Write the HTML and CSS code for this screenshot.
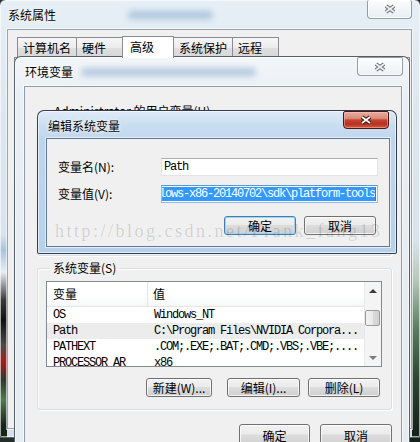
FILE: index.html
```html
<!DOCTYPE html>
<html lang="zh-CN">
<head>
    <meta charset="UTF-8">
    <meta name="viewport" content="width=device-width, initial-scale=1.0">
    <title>编辑系统变量</title>
    <link rel="stylesheet" href="styles.css">
</head>
<body>
    <div class="desktop">

        <!-- 系统属性 -->
        <div class="window sysprops">
            <div class="titlebar">
                <span class="title">系统属性</span>
                <span class="title-blur"></span>
                <button class="close-btn">
                    <svg width="12" height="10" viewBox="0 0 12 10"><path d="M2 2L10 8M10 2L2 8" stroke="#6a6e73" stroke-width="4" fill="none"/><path d="M2 2L10 8M10 2L2 8" stroke="#eef1f4" stroke-width="1.8" fill="none"/></svg>
                </button>
            </div>
            <div class="client">
                <div class="tabs">
                    <span class="tab">计算机名</span>
                    <span class="tab">硬件</span>
                    <span class="tab active">高级</span>
                    <span class="tab">系统保护</span>
                    <span class="tab">远程</span>
                </div>
                <div class="tab-panel"></div>
            </div>
        </div>

        <!-- 环境变量 -->
        <div class="window envvars">
            <div class="titlebar">
                <span class="title">环境变量</span>
                <span class="title-blur"></span>
                <button class="close-btn">
                    <svg width="12" height="10" viewBox="0 0 12 10"><path d="M2 2L10 8M10 2L2 8" stroke="#6a6e73" stroke-width="4" fill="none"/><path d="M2 2L10 8M10 2L2 8" stroke="#eef1f4" stroke-width="1.8" fill="none"/></svg>
                </button>
            </div>
            <div class="client">
                <fieldset class="group user-group">
                    <legend>Administrator 的用户变量(U)</legend>
                </fieldset>
                <fieldset class="group sys-group">
                    <legend>系统变量(S)</legend>
                    <div class="listview">
                        <div class="list-body">
                            <div class="list-head">
                                <span class="col-name">变量</span>
                                <span class="col-value">值</span>
                            </div>
                            <div class="list-row"><span class="col-name">OS</span><span class="col-value">Windows_NT</span></div>
                            <div class="list-row selected"><span class="col-name">Path</span><span class="col-value">C:\Program Files\NVIDIA Corpora...</span></div>
                            <div class="list-row"><span class="col-name">PATHEXT</span><span class="col-value">.COM;.EXE;.BAT;.CMD;.VBS;.VBE;....</span></div>
                            <div class="list-row"><span class="col-name">PROCESSOR_AR</span><span class="col-value">x86</span></div>
                        </div>
                        <div class="scrollbar">
                            <span class="sb-btn"><i class="arrow-up"></i></span>
                            <span class="sb-track"><span class="sb-thumb"></span></span>
                            <span class="sb-btn"><i class="arrow-down"></i></span>
                        </div>
                    </div>
                    <div class="button-row list-buttons">
                        <button class="btn btn-new">新建(W)...</button>
                        <button class="btn btn-edit">编辑(I)...</button>
                        <button class="btn btn-del">删除(L)</button>
                    </div>
                </fieldset>
                <div class="button-row dialog-buttons">
                    <button class="btn btn-ok">确定</button>
                    <button class="btn btn-cancel">取消</button>
                </div>
            </div>
        </div>

        <!-- 编辑系统变量 -->
        <div class="window editvar">
            <div class="titlebar">
                <span class="title">编辑系统变量</span>
                <button class="close-btn active">
                    <svg width="12" height="10" viewBox="0 0 12 10"><path d="M2 2L10 8M10 2L2 8" stroke="#3a0f0a" stroke-width="4" fill="none"/><path d="M2 2L10 8M10 2L2 8" stroke="#fff" stroke-width="1.8" fill="none"/></svg>
                </button>
            </div>
            <div class="client">
                <div class="field-row">
                    <span class="field-label">变量名(N):</span>
                    <div class="textbox">Path</div>
                </div>
                <div class="field-row">
                    <span class="field-label">变量值(V):</span>
                    <div class="textbox focused"><span class="selection">lows-x86-20140702\sdk\platform-tools</span><span class="caret"></span></div>
                </div>
                <div class="button-row edit-buttons">
                    <button class="btn btn-default">确定</button>
                    <button class="btn">取消</button>
                </div>
            </div>
        </div>

        <div class="watermark">http://blog.csdn.net/Frank_fang13</div>
    </div>
</body>
</html>
```

FILE: styles.css
```css
* {
    box-sizing: border-box;
}

body {
    margin: 0;
    font-family: "Noto Sans CJK SC", "Noto Sans", sans-serif;
    font-size: 12px;
    line-height: 14px;
    color: #000;
    background: #1b2520;
}

.desktop {
    position: relative;
    width: 420px;
    height: 442px;
    overflow: hidden;
    background: linear-gradient(90deg, #23302a, #17211b);
}

/* Window chrome */
.window {
    position: absolute;
    display: flex;
    flex-direction: column;
    border: 1px solid rgba(25, 35, 45, 0.7);
    border-radius: 7px 7px 2px 2px;
    box-shadow: inset 0 0 0 1px rgba(255, 255, 255, 0.6);
}

.titlebar {
    display: flex;
    align-items: flex-start;
    flex-shrink: 0;
    padding-left: 10px;
}

.title {
    margin-top: 8px;
    white-space: nowrap;
    text-shadow: 0 0 5px #fff, 0 0 2px #fff;
}

.title-blur {
    height: 8px;
    margin-top: 11px;
    border-radius: 4px;
    background: rgba(70, 120, 180, 0.35);
    filter: blur(3px);
}

.close-btn {
    margin-left: auto;
    display: flex;
    align-items: center;
    justify-content: center;
    height: 19px;
    padding: 0;
    border: 1px solid rgba(70, 80, 95, 0.55);
    border-radius: 2px 2px 4px 4px;
    background: linear-gradient(rgba(255, 255, 255, 0.85), rgba(232, 238, 243, 0.6));
    box-shadow: inset 0 0 0 1px rgba(255, 255, 255, 0.7);
}

.close-btn.active {
    border-color: #4a1712;
    background: linear-gradient(#e9ad9f 0%, #d98a77 40%, #c5452f 50%, #b7301f 75%, #d55c42 100%);
    box-shadow: inset 0 0 0 1px rgba(255, 200, 190, 0.45);
}

.client {
    flex: 1;
    min-height: 0;
    background: #f0f0f0;
    border: 1px solid #8e9baa;
    box-shadow: 0 0 0 1px rgba(255, 255, 255, 0.6);
}

/* 系统属性 */
.sysprops {
    left: -1px;
    top: -1px;
    width: 422px;
    height: 439px;
    background:
        linear-gradient(180deg, rgba(0, 0, 0, 0) 235px, #a9c2dc 250px, #e6edf2 272px, #3a3a3a 300px, #111 320px, #4a4a4a 345px, #a51c1c 362px, #2d3a2d 380px, #527a52 400px, #182418 425px) 0 0 / 7px 100% no-repeat,
        linear-gradient(180deg, rgba(0, 0, 0, 0) 240px, #b7c9b9 280px, #587a5e 330px, #2b4530 380px, #16231a 430px) 100% 0 / 8px 100% no-repeat,
        linear-gradient(180deg, #e7eff6 0, #dbe6ef 120px, #d4e0ea);
}

.sysprops .titlebar {
    height: 29px;
    padding-left: 8px;
}

.sysprops .title-blur {
    width: 85px;
    margin-left: 72px;
}

.sysprops .close-btn {
    width: 45px;
    margin-right: 8px;
    border-top: none;
}

.sysprops .client {
    display: flex;
    flex-direction: column;
    margin: 0 8px 8px 7px;
    border-color: #98a3ae;
}

.tabs {
    display: flex;
    align-items: flex-start;
    padding: 6px 0 0 9px;
}

.tab {
    height: 20px;
    min-width: 47px;
    margin-top: 1px;
    margin-left: -1px;
    padding: 0 5px;
    border: 1px solid #898c95;
    border-bottom: none;
    line-height: 19px;
    white-space: nowrap;
    background: linear-gradient(#f6f6f6, #ececec 50%, #dfdfdf 51%, #d8d8d8);
}

.tab:first-child {
    margin-left: 0;
}

.tab.active {
    position: relative;
    z-index: 1;
    height: 22px;
    min-width: 52px;
    margin-top: 0;
    padding: 0 7px;
    line-height: 20px;
    background: #fff;
}

.tab-panel {
    flex: 1;
    margin: -1px 1px 0 6px;
    border: 1px solid #898c95;
    background: #fcfcfc;
}

/* 环境变量 */
.envvars {
    left: 14px;
    top: 56px;
    width: 396px;
    height: 420px;
    background: linear-gradient(180deg, #f3f6f9, #e9eff4 40px, #e4ebf1);
}

.envvars .titlebar {
    height: 29px;
}

.envvars .title-blur {
    width: 175px;
    margin-left: 8px;
}

.envvars .close-btn {
    width: 46px;
    margin-right: 6px;
}

.envvars .client {
    margin: 0 7px 0 9px;
    padding: 18px 9px 0 12px;
}

.group {
    margin: 0;
    min-width: 0;
    border: 1px solid #d5dfe5;
    border-radius: 3px;
    box-shadow: inset 1px 1px 0 #fff, 1px 1px 0 #fff;
}

.group legend {
    margin-left: 4px;
    padding: 0 3px;
    line-height: 12px;
}

.user-group {
    height: 151px;
    margin-bottom: 6px;
}

.sys-group {
    padding: 7px 9px 12px 8px;
}

.listview {
    display: flex;
    height: 86px;
    border: 1px solid #828790;
    background: #fff;
}

.list-body {
    flex: 1;
    overflow: hidden;
}

.list-head {
    display: flex;
    height: 25px;
    border-bottom: 1px solid #e5e5e5;
    background: linear-gradient(#fff, #fff 55%, #f6f7f8);
    line-height: 24px;
}

.list-head .col-name {
    border-right: 1px solid #e5e5e5;
}

.list-row {
    display: flex;
    height: 16px;
    line-height: 16px;
    font-family: "Liberation Mono", monospace;
    font-size: 12px;
    letter-spacing: -1.2px;
    white-space: nowrap;
}

.list-row.selected {
    background: #ececec;
}

.col-name {
    width: 101px;
    flex-shrink: 0;
    padding-left: 6px;
}

.col-value {
    padding-left: 5px;
}

.list-row .col-value {
    padding-left: 6px;
}

.scrollbar {
    display: flex;
    flex-direction: column;
    width: 17px;
    border-left: 1px solid #e8e8e8;
    background: #f4f4f4;
}

.sb-btn {
    display: flex;
    align-items: center;
    justify-content: center;
    height: 17px;
}

.sb-track {
    flex: 1;
    padding-top: 11px;
}

.sb-thumb {
    display: block;
    height: 16px;
    margin: 0 1px 0 0;
    border: 1px solid #9a9a9a;
    border-radius: 2px;
    background: linear-gradient(90deg, #f4f4f4, #e9e9e9 50%, #dadada 51%, #d0d0d0);
}

.arrow-up {
    border-left: 4px solid transparent;
    border-right: 4px solid transparent;
    border-bottom: 4px solid #3c3c3c;
}

.arrow-down {
    border-left: 4px solid transparent;
    border-right: 4px solid transparent;
    border-top: 4px solid #7a7a7a;
}

/* Buttons */
.button-row {
    display: flex;
    justify-content: flex-end;
}

.btn {
    height: 19px;
    padding: 0;
    font: inherit;
    line-height: 16px;
    color: #000;
    text-align: center;
    white-space: nowrap;
    border: 1px solid #707070;
    border-radius: 3px;
    background: linear-gradient(#f2f2f2, #ebebeb 45%, #dddddd 50%, #cfcfcf);
    box-shadow: inset 0 0 0 1px rgba(255, 255, 255, 0.75);
}

.list-buttons {
    margin: 11px 2px 0 0;
}

.btn-new {
    width: 66px;
}

.btn-edit {
    width: 73px;
    margin-left: 15px;
}

.btn-del {
    width: 72px;
    margin-left: 8px;
}

.dialog-buttons {
    margin-top: 14px;
    gap: 10px;
}

.dialog-buttons .btn {
    width: 72px;
    height: 22px;
    line-height: 19px;
}

.dialog-buttons .btn-ok {
    width: 71px;
}

/* 编辑系统变量 */
.editvar {
    left: 37px;
    top: 110px;
    width: 360px;
    height: 144px;
    border-color: rgba(25, 35, 50, 0.85);
    background: linear-gradient(180deg, #dfebf7 0, #cadef1 14px, #bdd5ed 30px, #b8d1ea);
}

.editvar .titlebar {
    height: 27px;
}

.editvar .close-btn {
    width: 46px;
    height: 18px;
    margin-right: 7px;
}

.editvar .client {
    margin: 0 6px 6px 8px;
    padding: 19px 11px 0 11px;
    border-color: #5e7a98;
}

.field-row {
    display: flex;
    align-items: center;
    height: 18px;
}

.field-row + .field-row {
    margin-top: 9px;
}

.field-label {
    width: 103px;
    flex-shrink: 0;
    line-height: 18px;
}

.textbox {
    flex: 1;
    display: flex;
    align-items: center;
    height: 18px;
    padding-left: 2px;
    overflow: hidden;
    border: 1px solid #e2e3ea;
    border-top-color: #abadb3;
    background: #fff;
    font-family: "Liberation Mono", monospace;
    font-size: 12px;
    letter-spacing: -1.2px;
    white-space: nowrap;
}

.textbox.focused {
    justify-content: flex-end;
    padding: 0 1px 0 0;
    border-color: #8dbbea;
    border-top-color: #5d95cf;
}

.selection {
    flex-shrink: 0;
    height: 14px;
    line-height: 14px;
    color: #fff;
    background: #3399ff;
}

.caret {
    flex-shrink: 0;
    width: 1px;
    height: 14px;
    background: #c45a00;
}

.edit-buttons {
    margin: 13px 2px 0 0;
    gap: 8px;
}

.edit-buttons .btn {
    width: 72px;
}

.btn-default {
    border-color: #3c7fb1;
    box-shadow: inset 0 0 0 1px #9fd6f5;
}

.watermark {
    position: absolute;
    left: 55px;
    top: 222px;
    font-family: "Liberation Serif", serif;
    font-size: 18px;
    line-height: 18px;
    letter-spacing: 2.5px;
    color: rgba(0, 0, 0, 0.14);
    white-space: nowrap;
    pointer-events: none;
}
```
